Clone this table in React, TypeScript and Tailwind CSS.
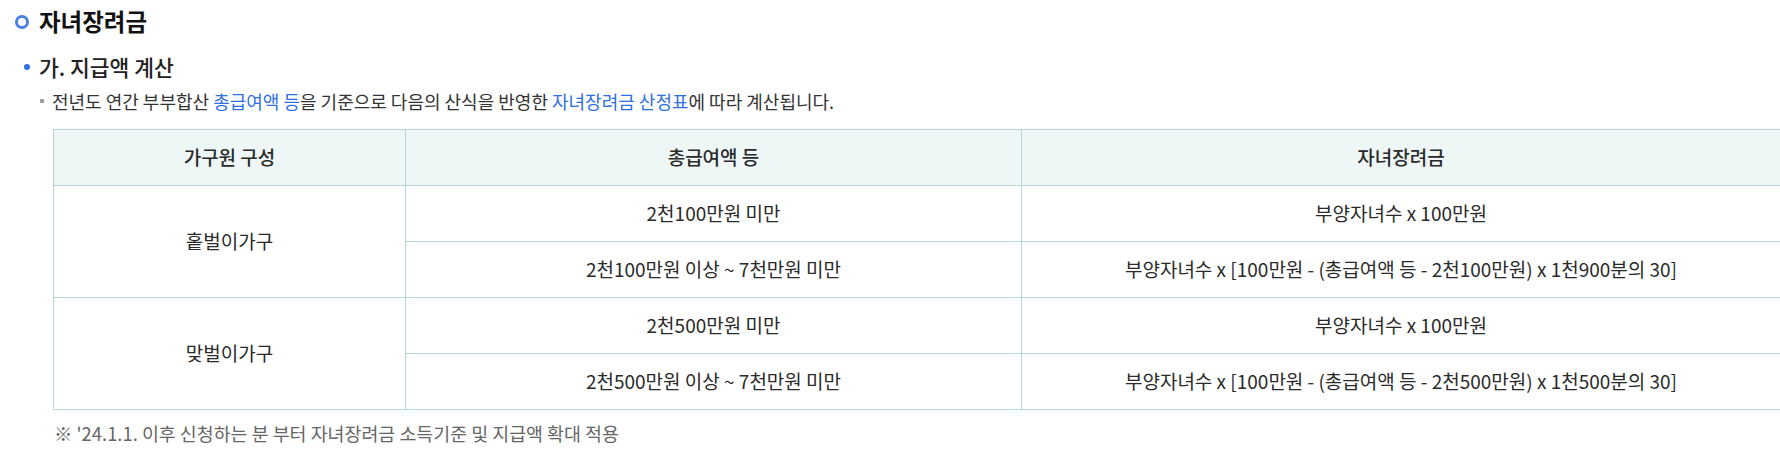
import React from "react";

const rows = [
  {
    group: "홑벌이가구",
    items: [
      ["2천100만원 미만", "부양자녀수 x 100만원"],
      ["2천100만원 이상 ~ 7천만원 미만", "부양자녀수 x [100만원 - (총급여액 등 - 2천100만원) x 1천900분의 30]"],
    ],
  },
  {
    group: "맞벌이가구",
    items: [
      ["2천500만원 미만", "부양자녀수 x 100만원"],
      ["2천500만원 이상 ~ 7천만원 미만", "부양자녀수 x [100만원 - (총급여액 등 - 2천500만원) x 1천500분의 30]"],
    ],
  },
];

const cell = "border border-[#b5d6da] text-center align-middle h-[56px] p-0";

export default function App() {
  return (
    <div className="w-[1780px] h-[461px] overflow-hidden bg-white text-[#333] font-['Noto_Sans_CJK_KR',sans-serif]">
      <div className="h-[44px] flex items-center pl-[15px] gap-[10px]">
        <span className="w-[14px] h-[14px] rounded-full border-[3px] border-[#4a7fe3]" />
        <h1 className="text-[23.5px] font-bold text-[#111] leading-none">자녀장려금</h1>
      </div>
      <div className="h-[46px] flex items-center pl-[24px] gap-[9px]">
        <span className="w-[6px] h-[6px] rounded-full bg-[#2f6fe4]" />
        <h2 className="text-[21.5px] font-medium text-[#222] leading-none">가. 지급액 계산</h2>
      </div>
      <p className="h-[22px] flex items-center pl-[40px] gap-[8px] text-[18px]">
        <span className="w-[4px] h-[4px] bg-[#a0a0a0]" />
        <span>
          전년도 연간 부부합산 <span className="text-[#2f6fe4]">총급여액 등</span>을 기준으로 다음의 산식을 반영한{" "}
          <span className="text-[#2f6fe4]">자녀장려금 산정표</span>에 따라 계산됩니다.
        </span>
      </p>
      <table className="mt-[17px] ml-[53px] w-[1728px] border-collapse table-fixed text-[19px] text-[#2a2a2a]">
        <colgroup>
          <col className="w-[352px]" />
          <col className="w-[616px]" />
          <col />
        </colgroup>
        <thead>
          <tr className="bg-[#eef7f6]">
            <th className={cell + " font-medium"}>가구원 구성</th>
            <th className={cell + " font-medium"}>총급여액 등</th>
            <th className={cell + " font-medium"}>자녀장려금</th>
          </tr>
        </thead>
        <tbody>
          {rows.map((r) =>
            r.items.map((it, i) => (
              <tr key={r.group + i}>
                {i === 0 && (
                  <td rowSpan={2} className={cell}>
                    {r.group}
                  </td>
                )}
                <td className={cell}>{it[0]}</td>
                <td className={cell}>{it[1]}</td>
              </tr>
            ))
          )}
        </tbody>
      </table>
      <p className="mt-[12px] ml-[54px] h-[24px] flex items-center text-[18.4px] text-[#666]">
        ※ '24.1.1. 이후 신청하는 분 부터 자녀장려금 소득기준 및 지급액 확대 적용
      </p>
    </div>
  );
}
